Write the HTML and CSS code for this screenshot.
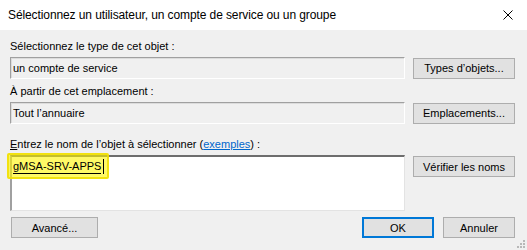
FILE: index.html
```html
<!DOCTYPE html>
<html lang="fr">
<head>
    <meta charset="utf-8">
    <title>Sélectionnez un utilisateur</title>
    <link rel="stylesheet" href="styles.css">
</head>
<body>
    <div class="dialog">
        <div class="titlebar">
            <span class="title">Sélectionnez un utilisateur, un compte de service ou un groupe</span>
            <svg class="close" width="10" height="10" viewBox="0 0 10 10">
                <path d="M0.5 0.5 L9.5 9.5 M9.5 0.5 L0.5 9.5" stroke="#000" stroke-width="1"/>
            </svg>
        </div>
        <div class="content">
            <div class="label">Sélectionnez le type de cet objet :</div>
            <div class="row">
                <div class="field">un compte de service</div>
                <button class="btn">Types d’objets...</button>
            </div>
            <div class="label">À partir de cet emplacement :</div>
            <div class="row">
                <div class="field">Tout l’annuaire</div>
                <button class="btn">Emplacements...</button>
            </div>
            <div class="label label-gap"><u>E</u>ntrez le nom de l’objet à sélectionner (<a href="#">exemples</a>) :</div>
            <div class="row row-top">
                <div class="names">
                    <div class="highlight"></div>
                    <span class="name">gMSA-SRV-APPS</span><span class="caret"></span>
                </div>
                <button class="btn btn-check">Vérifier les noms</button>
            </div>
            <div class="footer">
                <button class="btn btn-small">Avancé...</button>
                <div class="actions">
                    <button class="btn btn-small btn-default">OK</button>
                    <button class="btn btn-small">Annuler</button>
                </div>
            </div>
        </div>
        <svg class="grip" width="8" height="8" viewBox="0 0 8 8">
            <rect x="6" y="0" width="2" height="2" fill="#b8b8b8"/>
            <rect x="3" y="3" width="2" height="2" fill="#b8b8b8"/>
            <rect x="6" y="3" width="2" height="2" fill="#b8b8b8"/>
            <rect x="0" y="6" width="2" height="2" fill="#b8b8b8"/>
            <rect x="3" y="6" width="2" height="2" fill="#b8b8b8"/>
            <rect x="6" y="6" width="2" height="2" fill="#b8b8b8"/>
        </svg>
    </div>
</body>
</html>
```

FILE: styles.css
```css
* {
    margin: 0;
    padding: 0;
    box-sizing: border-box;
}

body {
    background-color: #f0f0f0;
    font-family: "Liberation Sans", Arial, sans-serif;
    font-size: 11px;
    color: #000;
}

.dialog {
    position: relative;
    width: 527px;
    height: 250px;
}

.titlebar {
    height: 30px;
    background-color: #ffffff;
    display: flex;
    align-items: center;
    justify-content: space-between;
    padding: 0 14px 0 8px;
}

.title {
    font-size: 12px;
    letter-spacing: -0.1px;
}

.content {
    padding: 10px 12px 0 10px;
}

.label {
    height: 13px;
    line-height: 13px;
    margin-bottom: 4px;
}

.label-gap {
    margin-top: 14px;
}

.label a {
    color: #0066cc;
}

.row {
    display: flex;
    align-items: center;
    gap: 8px;
    margin-bottom: 6px;
}

.row-top {
    align-items: flex-start;
}

.field {
    flex: 1;
    height: 22px;
    line-height: 20px;
    padding-left: 2px;
    border: 1px solid #a0a0a0;
    border-right-color: #ffffff;
    border-bottom-color: #ffffff;
    box-shadow: inset 1px 1px 0 #dcdcdc;
}

.btn {
    width: 102px;
    height: 21px;
    background-color: #e1e1e1;
    border: 1px solid #adadad;
    font-family: "Liberation Sans", Arial, sans-serif;
    font-size: 11px;
    color: #000;
}

.btn-check {
    margin-top: 1px;
}

.names {
    position: relative;
    flex: 1;
    height: 56px;
    background-color: #ffffff;
    border-top: 2px solid #6d6d6d;
    border-left: 2px solid #a0a0a0;
    border-right: 1px solid #e3e3e3;
    border-bottom: 1px solid #e3e3e3;
    padding: 2px 0 0 1px;
}

.name {
    position: relative;
    display: inline-block;
    line-height: 14px;
    border-bottom: 1px solid #000;
}

.caret {
    position: relative;
    display: inline-block;
    width: 1px;
    height: 15px;
    background-color: #000;
    vertical-align: top;
    margin-left: 2px;
}

.highlight {
    position: absolute;
    left: -5px;
    top: -4px;
    width: 102px;
    height: 26px;
    background-color: rgba(255, 245, 0, 0.6);
    border: 2px solid rgba(240, 222, 0, 0.85);
    border-radius: 2px;
}

.footer {
    display: flex;
    justify-content: space-between;
    align-items: center;
    margin-top: 4px;
    padding-left: 1px;
}

.actions {
    display: flex;
    gap: 9px;
}

.btn-small {
    width: 72px;
    height: 21px;
}

.footer > .btn-small {
    width: 87px;
}

.btn-default {
    border: 2px solid #0078d7;
}

.grip {
    position: absolute;
    right: 2px;
    bottom: 2px;
}
```
